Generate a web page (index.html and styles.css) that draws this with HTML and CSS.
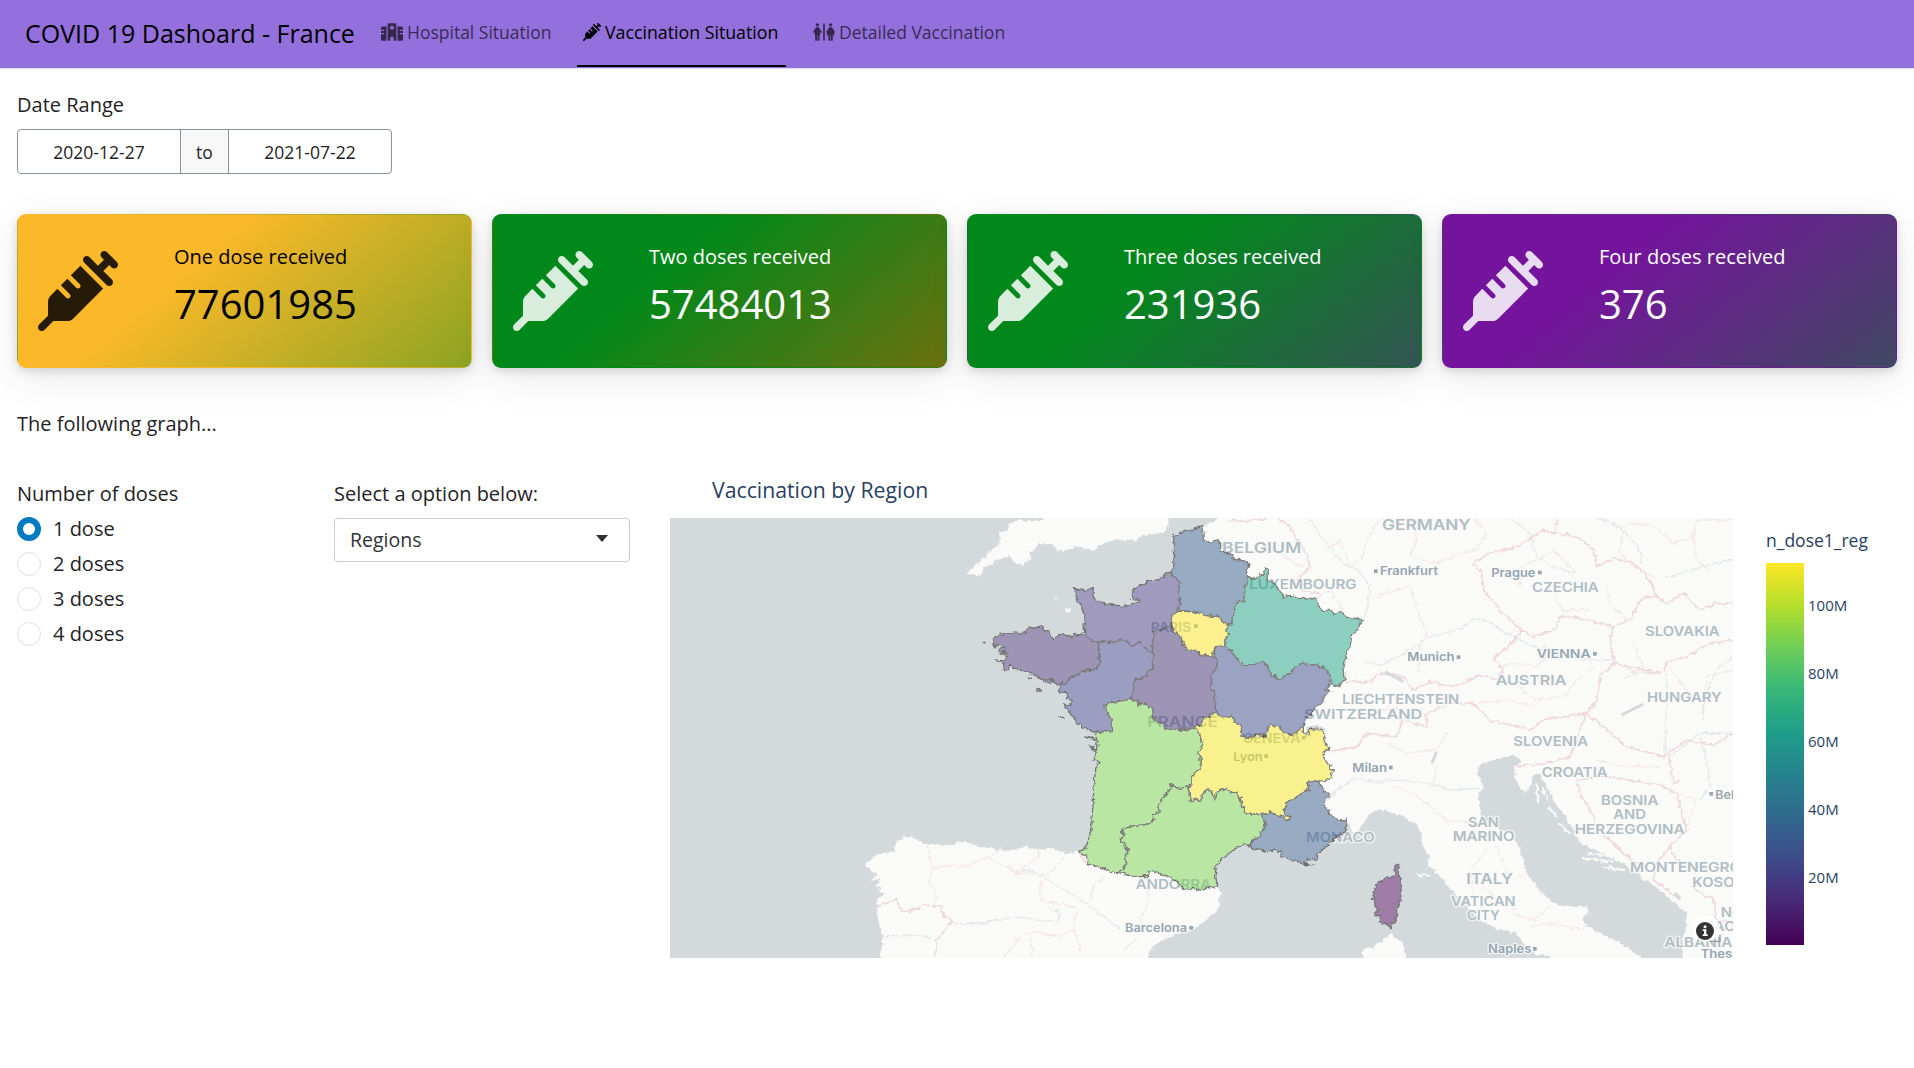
FILE: index.html
```html
<!DOCTYPE html>
<html lang="en">
<head>
<meta charset="utf-8">
<title>COVID 19 Dashoard - France</title>
<link rel="stylesheet" href="styles.css">
</head>
<body>
<svg class="defs" width="0" height="0" aria-hidden="true">
  <symbol id="syringe" viewBox="0 0 512 512"><path d="M441 7l32 32 32 32c9.4 9.4 9.4 24.6 0 33.9s-24.6 9.4-33.9 0l-15-15L417.9 128l55 55c9.4 9.4 9.4 24.6 0 33.9s-24.6 9.4-33.9 0l-72-72L295 73c-9.4-9.4-9.4-24.6 0-33.9s24.6-9.4 33.9 0l55 55L422.1 56 407 41c-9.4-9.4-9.4-24.6 0-33.9s24.6-9.4 33.9 0zM210.3 155.7l61.1-61.1c.3 .3 .6 .7 1 1l16 16 56 56 56 56 16 16c.3 .3 .6 .6 1 1l-191 191c-10.5 10.5-24.7 16.4-39.6 16.4H97.9L41 505c-9.4 9.4-24.6 9.4-33.9 0s-9.4-24.6 0-33.9l57-57V325.3c0-14.9 5.9-29.1 16.4-39.6l43.3-43.3 57 57c6.2 6.2 16.4 6.2 22.6 0s6.2-16.4 0-22.6l-57-57 41.4-41.4 57 57c6.2 6.2 16.4 6.2 22.6 0s6.2-16.4 0-22.6l-57-57z"/></symbol>
  <symbol id="hospital" viewBox="0 0 640 512"><path d="M192 48c0-26.500 21.500-48 48-48H400c26.500 0 48 21.500 48 48V512H368V432c0-26.500-21.500-48-48-48s-48 21.500-48 48v80H192V48zM48 96H160V512H48c-26.500 0-48-21.500-48-48V320H80c8.800 0 16-7.200 16-16s-7.200-16-16-16H0V224H80c8.800 0 16-7.200 16-16s-7.200-16-16-16H0V144c0-26.500 21.500-48 48-48zm544 0c26.500 0 48 21.500 48 48v48H560c-8.800 0-16 7.200-16 16s7.200 16 16 16h80v64H560c-8.800 0-16 7.200-16 16s7.200 16 16 16h80V464c0 26.500-21.500 48-48 48H480V96H592zM312 64c-8.800 0-16 7.200-16 16v24H272c-8.800 0-16 7.200-16 16v16c0 8.800 7.200 16 16 16h24v24c0 8.800 7.200 16 16 16h16c8.800 0 16-7.200 16-16V152h24c8.800 0 16-7.200 16-16V120c0-8.800-7.200-16-16-16H344V80c0-8.800-7.200-16-16-16H312z"/></symbol>
  <symbol id="restroom" viewBox="0 0 640 512"><circle cx="128" cy="48" r="48"/><circle cx="512" cy="48" r="48"/><rect x="296" y="0" width="48" height="512" rx="24"/><path d="M80 130Q128 96 176 130L248 242Q260 268 240 284 220 290 208 272L196 252 206 352H192V486Q188 512 164 512 140 510 136 486V352H120V486Q116 512 92 512 68 510 64 486V352H50L60 252 48 272Q36 290 16 284-4 268 8 242Z"/><path d="M464 130Q512 96 560 130L632 242Q644 268 624 284L606 280 630 352H576V486Q572 512 548 512 524 510 520 486V352H504V486Q500 512 476 512 452 510 448 486V352H394L418 280 400 284Q380 268 392 242Z"/></symbol>
</svg>

<header class="navbar">
  <div class="brand">COVID 19 Dashoard - France</div>
  <nav class="tabs">
    <a class="tab tab-hospital"><svg class="tab-icon wide"><use href="#hospital"/></svg><span>Hospital Situation</span></a>
    <a class="tab active"><svg class="tab-icon"><use href="#syringe"/></svg><span>Vaccination Situation</span></a>
    <a class="tab tab-detail"><svg class="tab-icon wide"><use href="#restroom"/></svg><span>Detailed Vaccination</span></a>
  </nav>
</header>

<main class="page">
  <section class="date-range">
    <div class="label">Date Range</div>
    <div class="date-group">
      <span class="date">2020-12-27</span><span class="to">to</span><span class="date">2021-07-22</span>
    </div>
  </section>

  <section class="cards">
    <article class="card yellow"><svg class="card-icon"><use href="#syringe"/></svg><div><p class="card-title">One dose received</p><p class="card-value">77601985</p></div></article>
    <article class="card green"><svg class="card-icon"><use href="#syringe"/></svg><div><p class="card-title">Two doses received</p><p class="card-value">57484013</p></div></article>
    <article class="card teal"><svg class="card-icon"><use href="#syringe"/></svg><div><p class="card-title">Three doses received</p><p class="card-value">231936</p></div></article>
    <article class="card purple"><svg class="card-icon"><use href="#syringe"/></svg><div><p class="card-title">Four doses received</p><p class="card-value">376</p></div></article>
  </section>

  <p class="intro">The following graph...</p>

  <section class="explore">
    <div class="doses">
      <div class="label">Number of doses</div>
      <div class="radio checked"><i></i>1 dose</div>
      <div class="radio"><i></i>2 doses</div>
      <div class="radio"><i></i>3 doses</div>
      <div class="radio"><i></i>4 doses</div>
    </div>
    <div class="option">
      <div class="label">Select a option below:</div>
      <div class="select">Regions<b class="caret"></b></div>
    </div>
    <div class="plot">
      <div class="plot-title">Vaccination by Region</div>
      <div class="plot-body">
        <svg class="map" viewBox="-900 54 3189 1320">
          <defs>
            <filter id="rough" filterUnits="userSpaceOnUse" x="-900" y="54" width="3189" height="1320" color-interpolation-filters="sRGB">
              <feTurbulence type="fractalNoise" baseFrequency="0.07" numOctaves="2" seed="4"/>
              <feDisplacementMap in="SourceGraphic" scale="17" xChannelSelector="R" yChannelSelector="G"/>
            </filter>
            <g id="regions">
              <path class="r-hdf" d="M695 80L698 95 700 115 712 122 722 132 732 125 745 122 752 136 752 150 775 160 788 166 790 182 815 181 830 183 837 195 829 205 834 225 838 240 825 262 822 305 806 309 790 318 796 330 788 350 785 372 768 372 752 360 748 345 722 349 700 345 682 336 665 338 645 333 628 333 626 318 632 300 625 285 627 245 615 234 600 218 612 200 608 190 614 175 610 150 612 108 635 97 665 90Z"/>
              <path class="r-nor" d="M598 218L615 234 627 245 625 285 632 310 622 335 603 348 608 375 585 382 575 389 548 400 552 425 544 440 550 462 530 450 520 435 505 428 492 437 480 435 460 418 440 425 415 427 388 425 360 420 345 405 342 380 345 350 335 320 318 290 318 272 310 263 330 270 345 272 370 265 368 285 378 305 400 310 430 314 460 320 485 312 508 299 485 295 490 270 530 245 565 238Z"/>
              <path class="r-bre" d="M388 425L385 450 390 488 375 512 360 510 345 512 325 525 300 530 290 550 262 551 240 535 228 543 205 530 180 520 150 508 132 505 120 495 115 509 104 512 100 490 75 480 110 478 113 462 90 462 110 456 86 452 92 444 108 444 90 436 70 440 68 418 80 410 95 402 130 400 135 392 150 402 170 395 175 380 192 385 215 377 222 390 235 395 250 418 265 407 290 403 305 412 314 398 320 408 345 405 360 420Z"/>
              <path class="r-pdl" d="M388 425L415 427 440 425 460 418 480 435 492 437 505 428 520 435 530 450 550 462 548 500 540 512 525 530 495 540 490 575 482 598 460 602 430 606 403 615 412 640 425 655 423 675 430 692 400 692 375 698 345 685 320 665 305 645 296 630 281 612 298 618 308 603 290 595 290 578 262 575 270 555 290 550 300 530 325 525 345 512 360 510 375 512 390 488 385 450Z"/>
              <path class="r-cvl" d="M603 375L612 398 628 408 640 425 648 448 680 448 695 468 725 466 742 485 740 510 722 518 725 560 735 590 734 615 740 640 720 643 700 655 690 675 672 685 640 687 600 690 585 688 575 670 560 665 550 650 548 625 535 618 520 608 505 618 500 602 482 595 490 575 495 540 525 530 548 500 550 462 544 440 552 425 548 400 575 389Z"/>
              <path class="r-idf" d="M622 335L645 333 665 338 682 336 700 345 722 349 748 345 752 362 775 375 770 390 777 405 768 415 768 438 738 440 725 466 695 468 680 448 648 448 640 425 628 408 612 398 605 375 603 348Z"/>
              <path class="r-ge" d="M838 233L858 234 870 228 880 222 885 205 895 207 892 220 892 240 915 252 930 275 940 290 958 286 970 288 985 296 1000 292 1035 297 1047 315 1055 332 1075 331 1095 340 1115 335 1130 350 1180 360 1160 388 1145 410 1140 440 1130 460 1122 500 1125 540 1105 560 1085 550 1078 520 1060 502 1040 495 1020 495 1000 487 975 500 960 522 945 528 930 538 915 528 900 525 898 505 880 487 850 494 815 493 795 470 780 450 768 438 768 415 777 405 770 390 775 372 785 372 788 350 796 330 790 318 806 309 822 305 825 262Z"/>
              <path class="r-bfc" d="M738 440L768 438 780 450 795 470 815 493 850 494 880 487 898 505 900 525 915 528 930 538 945 528 960 522 975 500 1000 487 1020 495 1040 495 1060 502 1078 520 1085 550 1065 568 1080 570 1065 585 1058 602 1040 620 1025 640 1005 660 998 685 965 705 945 700 925 680 900 675 888 715 870 705 850 710 820 713 815 680 792 665 785 648 760 654 740 642 734 615 735 590 725 560 722 518 740 510 742 485 730 466Z"/>
              <path class="r-ara" d="M732 640L745 643 760 654 785 645 792 665 815 680 812 705 830 715 850 708 870 704 888 712 892 690 900 675 925 680 945 700 965 705 990 690 1000 675 1000 698 1018 707 1012 690 1035 686 1060 690 1065 725 1078 745 1060 755 1060 770 1072 790 1090 810 1082 835 1065 842 1045 843 1025 848 1010 845 1018 870 1000 875 975 895 955 905 942 925 945 945 962 950 955 962 935 950 920 948 900 932 895 945 880 940 855 942 830 942 815 920 810 890 795 877 780 878 770 865 748 872 732 898 723 873 712 868 700 878 690 900 660 902 655 865 668 830 680 810 690 810 690 770 682 755 698 735 692 705 672 685 690 675 700 655Z"/>
              <path class="r-naq" d="M482 598L500 602 505 618 520 608 535 618 548 625 550 650 560 665 575 670 585 688 600 690 640 687 672 685 692 705 698 735 682 755 690 770 690 810 680 810 668 830 658 860 630 866 600 855 598 872 585 885 562 915 568 935 550 945 552 960 535 972 500 978 460 985 455 1025 475 1050 466 1070 470 1090 450 1117 430 1118 400 1103 380 1100 355 1090 350 1070 325 1055 350 1040 358 1010 365 980 370 900 372 850 378 800 390 787 372 778 380 755 357 735 380 748 382 722 345 708 378 715 375 698 430 692 423 675 425 655 412 640 403 615 430 606 460 602Z"/>
              <path class="r-occ" d="M658 860L655 865 660 902 690 900 700 878 712 868 723 873 732 898 748 872 770 865 780 878 795 877 810 890 815 920 830 942 855 942 880 940 879 955 888 975 870 1005 850 1020 835 1037 820 1030 775 1062 750 1080 740 1095 736 1120 738 1140 745 1160 715 1164 695 1172 670 1165 645 1168 615 1142 580 1124 535 1112 532 1130 505 1130 480 1128 450 1117 470 1090 466 1070 475 1050 455 1025 460 985 500 978 535 972 552 960 550 945 568 935 562 915 585 885 598 872 600 855 630 866Z"/>
              <path class="r-paca" d="M1045 845L1055 857 1060 870 1078 885 1062 900 1068 925 1083 945 1105 960 1132 958 1130 980 1116 1003 1100 1010 1075 1035 1045 1060 1040 1078 1020 1076 1000 1088 980 1085 935 1070 932 1055 905 1050 890 1056 870 1050 838 1040 850 1020 870 1005 888 975 879 955 880 940 895 945 900 932 920 948 935 950 955 962 962 950 945 945 942 925 955 905 975 895 1000 875 1018 870 1010 845 1025 848Z"/>
              <path class="r-cor" d="M1275 1096L1286 1095 1286 1118 1290 1145 1293 1170 1293 1200 1280 1225 1278 1255 1268 1270 1262 1285 1248 1274 1228 1264 1232 1248 1214 1242 1226 1230 1212 1220 1218 1206 1207 1200 1214 1190 1206 1180 1214 1174 1218 1152 1236 1141 1256 1132 1266 1128 1275 1132Z"/>
              <path class="r-bre" d="M37 428L44 424 47 429ZM198 568L208 565 215 574 205 577ZM176 532L184 534ZM221 542L232 536 247 543 233 547Z"/>
              <path class="r-pdl" d="M270 647L281 651ZM1002 1092L1014 1096 1012 1090ZM1020 1096L1032 1090Z"/>
            </g>
          </defs>
          <rect class="sea" x="-900" y="54" width="3189" height="1320"/>
          <g filter="url(#rough)">
            <path class="land" d="M745 30L745 54 695 82 630 200 620 400 500 700 420 900 400 1050 325 1055 290 1060 240 1045 210 1052 170 1040 110 1052 60 1045 15 1038 -20 1022 -50 1032 -140 1032 -160 1015 -195 1010 -230 1035 -225 1055 -270 1060 -290 1070 -315 1095 -298 1110 -280 1122 -295 1142 -270 1135 -280 1160 -262 1160 -275 1172 -258 1178 -278 1200 -280 1240 -272 1275 -262 1320 -270 1390 530 1390 540 1350 560 1330 600 1310 665 1290 720 1250 752 1220 745 1190 755 1175 735 1155 700 1120 730 1070 780 1040 850 1000 900 1020 990 1060 1045 1050 1100 1000 1135 965 1145 998 1160 995 1185 965 1195 945 1230 928 1275 940 1340 975 1355 1000 1357 1035 1377 1070 1372 1100 1395 1110 1410 1130 1435 1160 1465 1190 1500 1230 1540 1265 1590 1290 1640 1300 1660 1330 1700 1365 1740 1368 1745 1390 2030 1390 2010 1370 1970 1340 1910 1310 1850 1275 1835 1260 1858 1235 1850 1220 1785 1220 1740 1202 1700 1160 1670 1120 1655 1060 1630 1005 1550 970 1530 935 1525 880 1540 865 1535 845 1520 820 1525 800 1550 785 1610 768 1640 768 1650 785 1632 800 1638 840 1665 882 1680 860 1690 825 1710 820 1735 870 1775 930 1830 1030 1910 1065 1975 1100 2025 1140 2080 1180 2110 1205 2135 1230 2150 1235 2150 1280 2135 1320 2140 1390 2310 1390 2310 30Z"/>
            <path class="land" d="M-11 218L10 200 30 185 60 155 90 125 88 95 115 88 118 68 160 60 222 64 220 40 598 40 598 70 580 98 520 105 500 122 445 120 400 130 365 150 320 138 300 148 265 155 250 134 205 132 180 158 180 175 155 198 135 188 115 170 75 182 40 205 35 228 20 225Z"/>
            <path class="land" d="M1175 1390L1178 1350 1215 1340 1260 1302 1298 1330 1310 1390ZM1338 1122L1365 1120 1380 1128 1345 1130ZM250 298L262 292 262 300ZM285 328L302 325 304 334 290 335ZM345 120L390 128 375 150 350 140Z"/>
            <path class="islands" d="M1700 850L1705 910M1715 860L1735 900M1735 920L1760 950M1745 890L1775 930M1765 970L1800 1000M1850 1060L1920 1068M1840 1075L1930 1085M1900 1100L1960 1110M1860 1040L1900 1050"/>
            <g class="rivers">
              <path d="M1020 54L1060 120 1120 190 1170 215 1200 260 1195 310 1180 360M1180 485L1230 495 1260 482 1320 450 1380 410 1480 385 1510 355 1560 365 1600 395 1670 430 1740 460 1850 480 1930 480 2000 520 2090 515 2090 620 2085 760M1875 54L1920 65 1970 100 2010 145 2015 190M2080 235L2140 220 2230 190 2289 180M2289 470L2240 510 2200 600 2200 660M1620 54L1680 100 1700 170 1750 200 1810 220M0 1268L50 1265 150 1250 210 1262 265 1262 270 1235 230 1220M130 1110L190 1115 260 1155 320 1190 400 1250 450 1285M-50 1270L40 1272 100 1255M-262 1310L-210 1310 -150 1303 -110 1320M1060 910L1100 870 1150 835 1210 845 1280 840 1370 850 1440 870 1530 865M2289 700L2190 700 2100 770M2190 710L2210 780 2220 860 2190 900"/>
            </g>
            <g class="minor">
              <path d="M-130 1035L-120 1070 -110 1105 -60 1095 -20 1100 60 1070 95 1045M-110 1105L-125 1150 -100 1180 -110 1215M60 1075L110 1100 140 1120 170 1095 200 1075 210 1048M130 1120L180 1120 230 1125 260 1100 285 1065M215 1140L210 1200 260 1210 320 1220 310 1290 340 1374M100 1374L150 1310 200 1295 260 1310 310 1290M360 1200L370 1160 400 1130M540 1150L530 1220 510 1260 520 1300 460 1350M180 1310L190 1374"/>
              <path d="M1050 160L1110 120 1140 200 1170 180 1210 80 1240 54M1330 54L1340 120 1320 170 1400 190 1470 160 1520 150 1550 100 1510 54M1220 290L1280 270 1320 260 1350 350 1370 400 1345 450 1345 520M1650 260L1655 200 1700 180 1750 150 1800 200 1820 220M1750 290L1780 330 1860 330M1910 260L1920 310 1980 370M1950 80L1990 70 2050 75 2110 130 2170 110 2180 60 2289 60M2170 110L2180 180 2220 210M1960 90L1950 160 1990 200 2050 230M1580 500L1640 490 1700 500 1730 470 1720 430M1640 560L1700 600 1780 590 1820 540 1870 500M1520 610L1600 600 1700 620M1180 660L1260 620 1330 650 1360 620M1250 730L1310 760 1400 750 1430 700M1400 800L1390 850 1440 870M1270 860L1330 880 1430 960 1510 970M1500 1120L1560 1180 1600 1210 1640 1230M1550 1050L1500 1110 1510 1180M1580 1040L1620 1140 1670 1120M1630 1240L1690 1260 1740 1220M1680 1280L1750 1270 1840 1290 1850 1270M1990 430L2020 500 1960 540M2100 500L2140 560 2180 600M2289 510L2210 530 2200 600M860 160L920 150 970 190 1020 210M1030 300L1080 270 1120 330M1880 780L1960 800 2070 800M2100 870L2180 900 2150 980"/>
            </g>
            <path class="border" d="M770 60L830 65 900 54M925 54L960 80 975 110 1010 160 1020 200 980 240 1000 275 1050 280M1125 545L1200 545 1230 520 1300 530 1330 570 1380 545 1440 560 1480 550 1530 525 1580 540 1600 510 1570 475 1625 430 1655 390M1655 390L1600 340 1540 270 1535 220 1510 190 1560 160 1640 140 1690 110 1720 90 1755 100 1760 54M1740 95L1820 110 1870 145 1880 200 1930 175 1990 190 2040 240 2060 290 2020 290 1980 360 1930 380 1830 355 1770 350 1755 390 1690 410 1655 390M2060 290L2090 310 2140 280 2190 330 2240 310 2289 310M1930 380L1920 440 1935 490 1890 530 1880 600 1850 640 1780 650 1720 660 1680 690 1560 660 1510 610 1440 610 1370 640 1370 680 1300 660 1280 710 1190 700 1160 740 1080 755M2289 420L2220 430 2150 470 2090 485 2080 515M1930 490L2070 520M1850 640L1900 680 1970 740 2080 770 2150 720 2230 735 2289 700M1630 800L1680 795 1730 790 1800 770 1830 690 1850 640M1820 830L1830 880 1860 930 1890 990 1950 1050 2010 1100M1825 840L1900 830 1980 840 2070 855 2120 880 2150 990 2100 1040 2120 1080 2220 1110M2095 760L2110 850 2130 840M2100 1040L2060 1090 2050 1140 2130 1200M2160 1160L2230 1200 2240 1260 2289 1270M-278 1220L-245 1205 -220 1200 -205 1235 -150 1225 -140 1215 -90 1220 -80 1245 -50 1262 -100 1320 -105 1374M325 1058L350 1090 450 1118 535 1130"/>
            <use href="#regions" class="region-land"/>
          </g>
          <g class="lakes"><path d="M1245 515L1300 545M1955 645L2020 612M1385 790L1400 755M1010 685L1040 680 1065 690M2115 1180L2130 1195"/></g>
          <g class="countries">
            <text x="756" y="160" font-size="43" textLength="238" lengthAdjust="spacingAndGlyphs">BELGIUM</text>
            <text x="838" y="267" font-size="38" textLength="322" lengthAdjust="spacingAndGlyphs">LUXEMBOURG</text>
            <text x="1236" y="90" font-size="43" textLength="266" lengthAdjust="spacingAndGlyphs">GERMANY</text>
            <text x="1686" y="277" font-size="39" textLength="200" lengthAdjust="spacingAndGlyphs">CZECHIA</text>
            <text x="2025" y="408" font-size="39" textLength="224" lengthAdjust="spacingAndGlyphs">SLOVAKIA</text>
            <text x="1577" y="556" font-size="41" textLength="212" lengthAdjust="spacingAndGlyphs">AUSTRIA</text>
            <text x="2031" y="607" font-size="39" textLength="224" lengthAdjust="spacingAndGlyphs">HUNGARY</text>
            <text x="1116" y="612" font-size="41" textLength="352" lengthAdjust="spacingAndGlyphs">LIECHTENSTEIN</text>
            <text x="1002" y="656" font-size="41" textLength="355" lengthAdjust="spacingAndGlyphs">SWITZERLAND</text>
            <text x="532" y="681" font-size="42" textLength="212" lengthAdjust="spacingAndGlyphs">FRANCE</text>
            <text x="542" y="395" font-size="39" textLength="122" lengthAdjust="spacingAndGlyphs">PARIS</text>
            <text x="818" y="729" font-size="38" textLength="174" lengthAdjust="spacingAndGlyphs">GENEVA</text>
            <text x="1630" y="739" font-size="39" textLength="224" lengthAdjust="spacingAndGlyphs">SLOVENIA</text>
            <text x="1715" y="831" font-size="39" textLength="198" lengthAdjust="spacingAndGlyphs">CROATIA</text>
            <text x="1893" y="916" font-size="39" textLength="172" lengthAdjust="spacingAndGlyphs">BOSNIA</text>
            <text x="1930" y="958" font-size="39" textLength="98" lengthAdjust="spacingAndGlyphs">AND</text>
            <text x="1814" y="1001" font-size="39" textLength="330" lengthAdjust="spacingAndGlyphs">HERZEGOVINA</text>
            <text x="1494" y="980" font-size="39" textLength="92" lengthAdjust="spacingAndGlyphs">SAN</text>
            <text x="1448" y="1023" font-size="39" textLength="186" lengthAdjust="spacingAndGlyphs">MARINO</text>
            <text x="1489" y="1153" font-size="43" textLength="140" lengthAdjust="spacingAndGlyphs">ITALY</text>
            <text x="1443" y="1219" font-size="39" textLength="194" lengthAdjust="spacingAndGlyphs">VATICAN</text>
            <text x="1491" y="1261" font-size="39" textLength="98" lengthAdjust="spacingAndGlyphs">CITY</text>
            <text x="1008" y="1026" font-size="39" textLength="206" lengthAdjust="spacingAndGlyphs">MONACO</text>
            <text x="497" y="1166" font-size="39" textLength="226" lengthAdjust="spacingAndGlyphs">ANDORRA</text>
            <text x="1980" y="1115" font-size="39" textLength="334" lengthAdjust="spacingAndGlyphs">MONTENEGRO</text>
            <text x="2167" y="1160" font-size="39" textLength="190" lengthAdjust="spacingAndGlyphs">KOSOVO</text>
            <text x="2252" y="1251" font-size="39" textLength="160" lengthAdjust="spacingAndGlyphs">NORTH</text>
            <text x="2190" y="1293" font-size="39" textLength="280" lengthAdjust="spacingAndGlyphs">MACEDONIA</text>
            <text x="2083" y="1340" font-size="39" textLength="204" lengthAdjust="spacingAndGlyphs">ALBANIA</text>
          </g>
          <g class="cities">
            <text x="1230" y="226" textLength="174" lengthAdjust="spacingAndGlyphs">Frankfurt</text><rect x="1212" y="208" width="11" height="11"/>
            <text x="1564" y="230" textLength="132" lengthAdjust="spacingAndGlyphs">Prague</text><rect x="1704" y="212" width="11" height="11"/>
            <text x="1312" y="483" textLength="142" lengthAdjust="spacingAndGlyphs">Munich</text><rect x="1460" y="466" width="11" height="11"/>
            <text x="1700" y="474" textLength="162" lengthAdjust="spacingAndGlyphs">VIENNA</text><rect x="1869" y="456" width="11" height="11"/>
            <text x="1147" y="816" textLength="104" lengthAdjust="spacingAndGlyphs">Milan</text><rect x="1257" y="797" width="11" height="11"/>
            <text x="790" y="782" textLength="88" lengthAdjust="spacingAndGlyphs">Lyon</text><rect x="883" y="763" width="11" height="11"/>
            <rect x="672" y="373" width="11" height="11"/><rect x="996" y="708" width="10" height="10"/>
            <text x="465" y="1297" textLength="186" lengthAdjust="spacingAndGlyphs">Barcelona</text><rect x="658" y="1278" width="11" height="11"/>
            <text x="1554" y="1360" textLength="130" lengthAdjust="spacingAndGlyphs">Naples</text><rect x="1689" y="1341" width="11" height="11"/>
            <text x="2236" y="896" textLength="162" lengthAdjust="spacingAndGlyphs">Belgrade</text><rect x="2218" y="876" width="11" height="11"/>
            <text x="2192" y="1375" textLength="240" lengthAdjust="spacingAndGlyphs">Thessaloniki</text>
          </g>
          <g filter="url(#rough)"><use href="#regions" class="region-fill"/></g>
          <g class="attribution"><rect x="2169" y="1246" width="80" height="80" rx="40"/><path class="tail" d="M2218 1324H2250V1304"/><circle cx="2205" cy="1293" r="27"/><circle class="mark" cx="2205" cy="1280" r="4.500"/><path class="mark" d="M2198 1288H2209V1303H2213V1308H2198V1303H2202V1293H2198Z"/></g>
        </svg>
        <div class="legend">
          <div class="legend-title">n_dose1_reg</div>
          <div class="legend-scale">
            <div class="colorbar"></div>
            <div class="ticks"><span>100M</span><span>80M</span><span>60M</span><span>40M</span><span>20M</span></div>
          </div>
        </div>
      </div>
    </div>
  </section>
</main>
</body>
</html>
```
FILE: styles.css
```css
* { box-sizing: border-box; }
body { margin: 0; background: #fff; color: #1f2326; font: 20px/30px "Open Sans", "Noto Sans", sans-serif; }
p { margin: 0; }
.defs { display: block; position: absolute; }

.navbar { height: 69px; display: flex; background: #9370db; border-bottom: 1px solid #e4e0ee; color: #000; }
.brand { padding-left: 25px; width: 371px; font-size: 25px; line-height: 66px; white-space: nowrap; }
.tabs { display: flex; gap: 12px; }
.tab { display: flex; align-items: center; gap: 4px; height: 67px; padding: 0 6px 2px; border-bottom: 2px solid transparent; font-size: 17.500px; color: rgba(0,0,0,.65); white-space: nowrap; }
.tab-hospital { width: 194px; padding-left: 10px; }
.tab.active { width: 209px; color: #000; border-color: #000; font-weight: 500; font-size: 17.750px; }
.tab-detail { padding-left: 15px; }
.tab-icon { width: 18px; height: 18px; flex: none; fill: currentColor; }
.tab-icon.wide { width: 22px; }

.page { padding: 0 17px; }
.date-range { padding-top: 21px; height: 145px; }
.label { line-height: 30px; }
.date-group { display: flex; margin-top: 9px; width: 375px; height: 45px; border: 1px solid #8a929b; border-radius: 4px; overflow: hidden; font-size: 17.500px; line-height: 45px; text-align: center; }
.date { flex: 1; }
.to { width: 49px; background: #f8f8f8; border: solid #8a929b; border-width: 0 1px; }

.cards { display: grid; grid-template-columns: repeat(4, 1fr); gap: 20px; }
.card { height: 154px; display: grid; grid-template-columns: 136px 1fr; align-items: center; padding-left: 20px; border: 1px solid transparent; border-radius: 9px; color: #fff; background: linear-gradient(140deg, var(--from) 36%, var(--to) 180%); box-shadow: 0 10px 40px rgba(0,0,0,.09), 0 3px 10px rgba(0,0,0,.14); }
.card-icon { width: 80px; height: 80px; fill: currentColor; opacity: .85; }
.card-title { font-size: 20px; line-height: 28px; }
.card-value { font-size: 40px; line-height: 48px; margin: 9px 0 12px; }
.yellow { --from: #fbb929; --to: #00891a; color: #000; }
.green { --from: #00891a; --to: #f15100; }
.teal { --from: #00891a; --to: #74149c; }
.purple { --from: #74149c; --to: #00891a; }

.intro { margin-top: 41px; }
.explore { display: flex; margin-top: 35px; }
.doses { width: 317px; padding-top: 5px; }
.radio { display: flex; align-items: center; gap: 12px; height: 35px; }
.doses .label { margin-bottom: 2px; }
.radio i { width: 24px; height: 24px; border: 1px solid #dee0e4; border-radius: 50%; }
.checked i { border: 6.500px solid #007bc2; }
.option { width: 336px; padding-top: 5px; }
.select { width: 296px; height: 44px; margin-top: 9px; padding: 0 21px 0 15px; display: flex; align-items: center; justify-content: space-between; border: 1px solid #c8cacc; border-radius: 4px; font-size: 19.500px; color: #303336; }
.caret { border: 6px solid transparent; border-top: 7px solid #303030; border-bottom: 0; margin-top: -4px; }

.plot { width: 1227px; color: #2a3f5f; }
.plot-title { height: 44px; padding: 1px 0 0 42px; font-size: 21.250px; line-height: 30px; }
.plot-body { display: flex; }
.map { width: 1063px; height: 440px; display: block; flex: none; overflow: hidden; }
.legend { padding: 6px 0 0 33px; }
.legend-title { font-size: 17.500px; height: 39px; line-height: 32px; white-space: nowrap; }
.legend-scale { display: flex; gap: 4px; }
.colorbar { width: 38px; height: 382px; background: linear-gradient(to top, #440154, #482878 11.100%, #3e4989 22.200%, #31688e 33.300%, #26828e 44.400%, #1f9e89 55.600%, #35b779 66.700%, #6ece58 77.800%, #b5de2b 88.900%, #fde725); }
.ticks { padding-top: 8px; font-size: 15px; line-height: 68px; }
.ticks span { display: block; }

.sea { fill: #d4dadc; }
.land { fill: #fafaf8; }
.islands { fill: none; stroke: #fafaf8; stroke-width: 7; }
.rivers, .minor, .border { fill: none; stroke-linejoin: round; }
.rivers { stroke: #e3e9eb; stroke-width: 4; }
.minor { stroke: #f5e8e7; stroke-width: 4; }
.border { stroke: #eed8db; stroke-width: 5; }
.lakes { fill: none; stroke: #d4dadc; stroke-width: 9; }
.region-land { fill: #fafaf8; }
.region-fill { opacity: .5; stroke: #000; stroke-width: 4; stroke-linejoin: round; }
.region-fill { --hdf: #355f8d; --nor: #443a83; --bre: #423175; --pdl: #3c4189; --cvl: #423175; --idf: #fde725; --ge: #1fa486; --bfc: #3e4a89; --ara: #f8e725; --naq: #7ad151; --paca: #365c8d; --cor: #440154; }
.r-hdf { fill: var(--hdf, #fafaf8); }
.r-nor { fill: var(--nor, #fafaf8); }
.r-bre { fill: var(--bre, #fafaf8); }
.r-pdl { fill: var(--pdl, #fafaf8); }
.r-cvl { fill: var(--cvl, #fafaf8); }
.r-idf { fill: var(--idf, #fafaf8); }
.r-ge { fill: var(--ge, #fafaf8); }
.r-bfc { fill: var(--bfc, #fafaf8); }
.r-ara { fill: var(--ara, #fafaf8); }
.r-naq, .r-occ { fill: var(--naq, #fafaf8); }
.r-paca { fill: var(--paca, #fafaf8); }
.r-cor { fill: var(--cor, #fafaf8); }
.countries, .cities { font-family: Inter, "Open Sans", sans-serif; font-weight: 600; stroke: rgba(250,250,248,.75); stroke-width: 8; paint-order: stroke; stroke-linejoin: round; }
.countries { fill: #b0bdc5; }
.cities { fill: #95a5b2; font-size: 36px; }
.cities rect { stroke: none; }
.attribution { fill: #333; }
.attribution rect { fill: rgba(255,255,255,.8); }
.attribution .tail { fill: none; stroke: #999; stroke-width: 4; }
.attribution .mark { fill: #fff; }
```
